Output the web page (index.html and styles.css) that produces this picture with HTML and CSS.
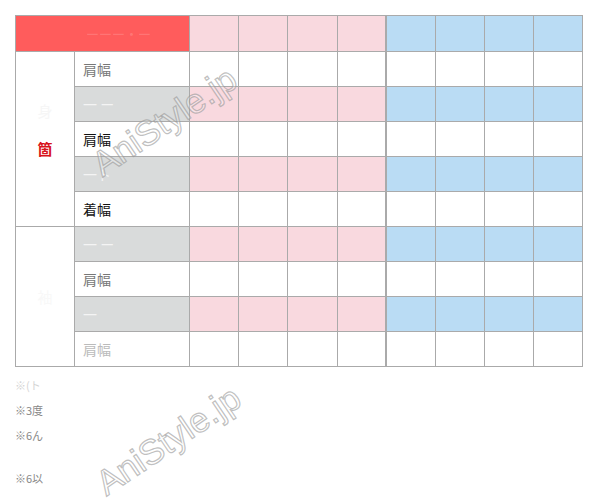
FILE: index.html
```html
<!DOCTYPE html>
<html lang="ja">
<head>
<meta charset="utf-8">
<link rel="stylesheet" href="styles.css">
</head>
<body>
<div class="page">
  <table class="size">
    <colgroup>
      <col class="c-group"><col class="c-item">
      <col class="c-d"><col class="c-d"><col class="c-d"><col class="c-d">
      <col class="c-d"><col class="c-d"><col class="c-d"><col class="c-d">
    </colgroup>
    <thead>
      <tr class="head">
        <th colspan="2" class="h-title"><span>ーーー・ー</span></th>
        <th class="p"></th><th class="p"></th><th class="p"></th><th class="p last-p"></th>
        <th class="b"></th><th class="b"></th><th class="b"></th><th class="b"></th>
      </tr>
    </thead>
    <tbody>
      <tr>
        <td rowspan="5" class="group"><span class="g-faint">身</span><span class="g-red">箇</span></td>
        <td class="item t-mid">肩幅</td>
        <td></td><td></td><td></td><td class="last-p"></td><td></td><td></td><td></td><td></td>
      </tr>
      <tr class="alt">
        <td class="item t-light">一 ー</td>
        <td class="p"></td><td class="p"></td><td class="p"></td><td class="p last-p"></td>
        <td class="b"></td><td class="b"></td><td class="b"></td><td class="b"></td>
      </tr>
      <tr>
        <td class="item t-dark">肩幅</td>
        <td></td><td></td><td></td><td class="last-p"></td><td></td><td></td><td></td><td></td>
      </tr>
      <tr class="alt">
        <td class="item t-light">一ト</td>
        <td class="p"></td><td class="p"></td><td class="p"></td><td class="p last-p"></td>
        <td class="b"></td><td class="b"></td><td class="b"></td><td class="b"></td>
      </tr>
      <tr>
        <td class="item t-dark">着幅</td>
        <td></td><td></td><td></td><td class="last-p"></td><td></td><td></td><td></td><td></td>
      </tr>
      <tr class="alt">
        <td rowspan="4" class="group"><span class="g-ghost">袖</span></td>
        <td class="item t-light">一 ー</td>
        <td class="p"></td><td class="p"></td><td class="p"></td><td class="p last-p"></td>
        <td class="b"></td><td class="b"></td><td class="b"></td><td class="b"></td>
      </tr>
      <tr>
        <td class="item t-mid">肩幅</td>
        <td></td><td></td><td></td><td class="last-p"></td><td></td><td></td><td></td><td></td>
      </tr>
      <tr class="alt">
        <td class="item t-light">一</td>
        <td class="p"></td><td class="p"></td><td class="p"></td><td class="p last-p"></td>
        <td class="b"></td><td class="b"></td><td class="b"></td><td class="b"></td>
      </tr>
      <tr>
        <td class="item t-faint">肩幅</td>
        <td></td><td></td><td></td><td class="last-p"></td><td></td><td></td><td></td><td></td>
      </tr>
    </tbody>
  </table>

  <div class="notes">
    <p class="n-faint">※(ト</p>
    <p>※3度</p>
    <p>※6ん</p>
    <p class="n-gap">※6以</p>
  </div>

  <div class="wm wm1">AniStyle.jp</div>
  <div class="wm wm2">AniStyle.jp</div>
</div>
</body>
</html>
```
FILE: styles.css
```css
html, body {
  margin: 0;
  padding: 0;
  background: #fff;
}
body {
  font-family: "Noto Sans CJK JP", "Noto Sans", sans-serif;
  color: #222;
}
.page {
  position: relative;
  width: 600px;
  height: 503px;
  padding: 15px 0 0 15px;
  box-sizing: border-box;
  overflow: hidden;
}
.size {
  border-collapse: collapse;
  table-layout: fixed;
  width: 568px;
  border: 1px solid #aaa;
}
.c-group { width: 59px; }
.c-item { width: 115px; }
.c-d { width: 49px; }
.size th, .size td {
  border: 1px solid #aaa;
  padding: 0;
}
.head { height: 36px; }
tbody tr { height: 35px; }
.h-title {
  background: #ff5c5c;
  text-align: left;
  font-weight: normal;
  font-size: 13px;
}
.h-title span {
  margin-left: 70px;
  color: rgba(255, 255, 255, 0.18);
}
.p { background: #f9d9df; }
.b { background: #badcf4; }
.last-p { border-right: 2px solid #aaa !important; }
.alt .item { background: #d9dbdb; }
.item {
  font-size: 14px;
  padding-left: 8px !important;
  text-align: left;
}
.t-dark { color: #111; }
.t-mid { color: #777; }
.t-light { color: #f4f4f4; }
.t-faint { color: #bbb; }
.group {
  background: #fff;
  text-align: center;
  vertical-align: middle;
  font-size: 15px;
}
.group span { display: block; line-height: 22px; }
.g-faint { color: #f6f6f6; margin-bottom: 16px; }
.g-red { color: #d8141c; font-weight: bold; margin-bottom: 18px; }
.g-ghost { color: #f8f8f8; }
.notes {
  margin-top: 10px;
  font-size: 11px;
  color: #888;
}
.notes p {
  margin: 0;
  height: 25px;
  line-height: 16px;
}
.notes .n-faint { color: #d4d4d4; }
.notes .n-gap { margin-top: 18px; }
.wm {
  position: absolute;
  font-family: "Liberation Sans", Arial, sans-serif;
  font-size: 35px;
  line-height: 1;
  color: rgba(255, 255, 255, 0.25);
  -webkit-text-stroke: 1.2px rgba(150, 150, 150, 0.6);
  white-space: nowrap;
  pointer-events: none;
  transform: translate(-50%, -50%) rotate(-34deg);
}
.wm1 { left: 164px; top: 121px; }
.wm2 { left: 168px; top: 440px; }
```
